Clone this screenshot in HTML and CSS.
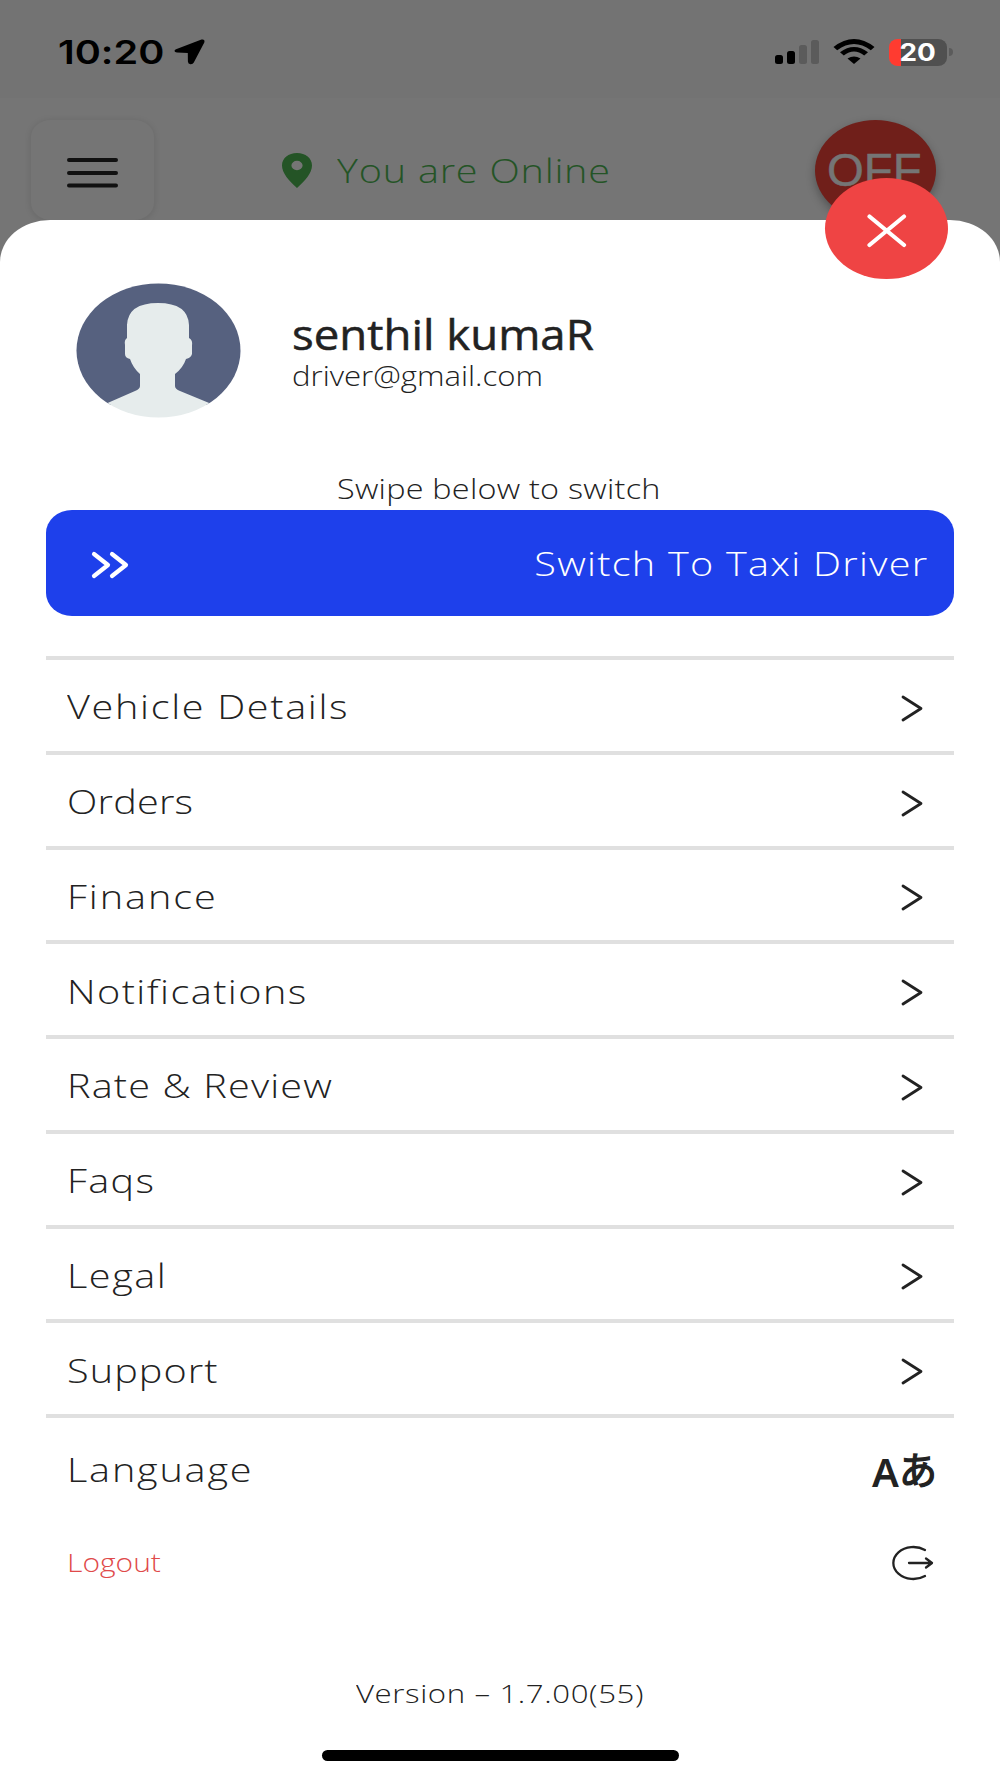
FILE: index.html
```
<!DOCTYPE html>
<html lang="en">
<head>
  <meta charset="UTF-8" />
  <meta name="viewport" content="width=device-width, initial-scale=1.0">
  <title>Driver Menu</title>
  <link rel="stylesheet" href="styles.css">
</head>
<body>
  <div class="screen">
    <div class="status-bar">
      <div class="status-left">
        <span class="time">10:20</span>
        <svg class="location" width="31" height="26" viewBox="0 0 31 26"><path d="M2 10.200 27.500.600Q31.300-.200 30.300 3.400L19.800 23.500Q18.800 25.400 16.500 25.200 14 25 13.900 22.500L13.800 14 3 13.600Q.600 13.200.500 11.900.500 10.800 2 10.200Z"/></svg>
      </div>
      <div class="status-right">
        <svg width="45" height="26" viewBox="0 0 45 26">
          <rect x="0" y="16" width="8" height="9" rx="2.500"/>
          <rect x="12" y="12" width="8" height="13" rx="2.500"/>
          <rect class="dim" x="24" y="6" width="8" height="19" rx="2.500"/>
          <rect class="dim" x="36" y="1" width="8" height="24" rx="2.500"/>
        </svg>
        <svg class="wifi" width="42" height="26" viewBox="0 0 42 26">
          <path d="M0.500 8Q21-8 41.500 8L37.800 11.300Q21-1.500 4.200 11.300Z"/>
          <path d="M7 13.300Q21 2.500 35 13.300L31.200 16.500Q21 8.500 10.800 16.500Z"/>
          <path d="M14.500 19.500Q21 15.300 27.500 19.500L21 25Z"/>
        </svg>
        <div class="battery"><span>20</span></div>
        <i class="battery-tip"></i>
      </div>
    </div>

    <div class="top-bar">
      <div class="menu-btn">
        <svg width="51" height="30" viewBox="0 0 51 30"><path d="M2 2H49M2 15H49M2 27.500H49"/></svg>
      </div>
      <div class="online">
        <svg width="30" height="35" viewBox="0 0 30 35"><path fill-rule="evenodd" d="M15 0C6.500 0 0 5 0 12.500 0 20 7 28 15 35 23 28 30 20 30 12.500 30 5 23.500 0 15 0ZM15 7.800A5.600 4.700 0 1 1 15 17.200 5.600 4.700 0 1 1 15 7.800Z"/></svg>
        <span class="wide">You are Online</span>
      </div>
      <div class="off-btn"><span class="wide">OFF</span></div>
    </div>

    <div class="sheet">
      <div class="close-btn">
        <svg width="40" height="34" viewBox="0 0 40 34"><path d="M2.500 2.500 37 31M37 2.500 2.500 31"/></svg>
      </div>

      <div class="profile">
        <svg class="avatar" width="165" height="135" viewBox="0 0 165 135">
          <defs><clipPath id="round"><ellipse cx="82.500" cy="67.500" rx="82" ry="67"/></clipPath></defs>
          <g clip-path="url(#round)">
            <path fill="#56617f" d="M0 0H165V122H0Z"/>
            <path fill="#e6ecec" d="M51 55V42Q52 20 82 20 112 20 113 42V55Q117 57 116 63V71Q115 75 110 76 107 85 99 91V103Q99 106 104 108L138 122V135H27V122L59 108Q64 106 64 103V91Q57 85 54 76 49 75 49 71V62Q48 57 51 55Z"/>
          </g>
        </svg>
        <div class="who">
          <div class="name wide">senthil kumaR</div>
          <div class="email wide">driver@gmail.com</div>
        </div>
      </div>

      <div class="hint"><span class="wide">Swipe below to switch</span></div>
      <div class="swipe">
        <svg width="38" height="28" viewBox="0 0 38 28"><path d="M3 3 17 14 3 25M21 3 35 14 21 25"/></svg>
        <span class="wide">Switch To Taxi Driver</span>
      </div>

      <div class="menu">
        <div class="row"><span class="wide">Vehicle Details</span><svg class="chevron" viewBox="0 0 22 27"><path d="M2 2 20 13.500 2 25"/></svg></div>
        <div class="row"><span class="wide">Orders</span><svg class="chevron" viewBox="0 0 22 27"><path d="M2 2 20 13.500 2 25"/></svg></div>
        <div class="row"><span class="wide">Finance</span><svg class="chevron" viewBox="0 0 22 27"><path d="M2 2 20 13.500 2 25"/></svg></div>
        <div class="row"><span class="wide">Notifications</span><svg class="chevron" viewBox="0 0 22 27"><path d="M2 2 20 13.500 2 25"/></svg></div>
        <div class="row"><span class="wide">Rate &amp; Review</span><svg class="chevron" viewBox="0 0 22 27"><path d="M2 2 20 13.500 2 25"/></svg></div>
        <div class="row"><span class="wide">Faqs</span><svg class="chevron" viewBox="0 0 22 27"><path d="M2 2 20 13.500 2 25"/></svg></div>
        <div class="row"><span class="wide">Legal</span><svg class="chevron" viewBox="0 0 22 27"><path d="M2 2 20 13.500 2 25"/></svg></div>
        <div class="row"><span class="wide">Support</span><svg class="chevron" viewBox="0 0 22 27"><path d="M2 2 20 13.500 2 25"/></svg></div>
        <div class="row language"><span class="wide">Language</span><div class="lang-icon"><b>A</b><span>あ</span></div></div>
      </div>

      <div class="logout">
        <span class="wide">Logout</span>
        <svg width="42" height="36" viewBox="0 0 42 36"><path d="M33 5A20 16 0 1 0 33 31M17 18H40M34 13.500 40 18 34 22.500"/></svg>
      </div>

      <div class="version"><span class="wide">Version – 1.7.00(55)</span></div>
      <div class="home-bar"></div>
    </div>
  </div>
</body>
</html>
```
FILE: styles.css
```
* {
  box-sizing: border-box;
}
body {
  margin: 0;
  font-family: "Open Sans", "Noto Sans CJK JP", sans-serif;
  font-weight: 300;
  font-size: 33px;
  font-variant-ligatures: none;
  color: #222;
  background: #757575;
}
svg {
  display: block;
  flex-shrink: 0;
}
.screen {
  width: 1000px;
  height: 1778px;
  overflow: hidden;
}
/* wide letterforms */
.wide {
  display: inline-block;
  white-space: nowrap;
  transform: scaleX(1.2);
  transform-origin: left center;
  letter-spacing: 0.65px;
}

/* status bar */
.status-bar {
  height: 98px;
  background: #737373;
  display: flex;
  justify-content: space-between;
  padding: 0 47px 0 58px;
}
.status-left, .status-right {
  display: flex;
  align-items: center;
  height: 104px;
}
.time {
  font-family: Inter, sans-serif;
  font-weight: 600;
  font-size: 33px;
  color: #000;
  width: 116px;
  transform: scaleX(1.2);
  transform-origin: left;
}
.dim {
  fill: #5b5b5b;
}
.wifi {
  margin: 0 14px 0 13px;
}
.battery {
  width: 58px;
  height: 27px;
  border-radius: 9px / 8px;
  background: linear-gradient(90deg, #ff3b30 12px, #505050 12px);
  font: 700 24px/27px Inter, sans-serif;
  color: #fff;
  text-align: center;
}
.battery span {
  display: inline-block;
  transform: scaleX(1.16);
}
.battery-tip {
  width: 4px;
  height: 8px;
  margin-left: 2px;
  border-radius: 0 4px 4px 0;
  background: #5b5b5b;
}

/* dimmed page header */
.top-bar {
  height: 122px;
  display: flex;
  align-items: flex-start;
  padding: 22px 64px 0 31px;
}
.menu-btn {
  width: 123px;
  height: 100px;
  border-radius: 20px / 17px;
  box-shadow: 0 1px 7px rgba(0, 0, 0, 0.12);
  display: flex;
  justify-content: center;
  padding-top: 38px;
}
.menu-btn path {
  stroke: #111;
  stroke-width: 4;
  stroke-linecap: round;
}
.online {
  display: flex;
  align-items: center;
  height: 100px;
  margin-left: 128px;
  gap: 25px;
  color: #245426;
}
.online svg {
  fill: #245426;
}
.off-btn {
  width: 121px;
  height: 101px;
  margin-left: auto;
  border-radius: 50%;
  background: #701f1a;
  box-shadow: 0 4px 10px rgba(0, 0, 0, 0.3);
  color: #757575;
  font: 400 46px/101px "Liberation Sans", sans-serif;
  padding-left: 12px;
}
.off-btn .wide {
  transform: scaleX(1.03);
  letter-spacing: 0;
  -webkit-text-stroke: 0.5px #757575;
}

/* bottom sheet */
.sheet {
  position: relative;
  height: 1558px;
  background: #fff;
  border-radius: 50px 50px 0 0 / 42px 42px 0 0;
  padding: 63px 46px 0;
}
.close-btn {
  position: absolute;
  top: -42px;
  right: 52px;
  width: 123px;
  height: 101px;
  border-radius: 50%;
  background: #ef4444;
  display: flex;
  align-items: center;
  justify-content: center;
  padding-top: 4px;
}
.close-btn path, .swipe path {
  fill: none;
  stroke: #fff;
  stroke-width: 4.200;
  stroke-linecap: round;
  stroke-linejoin: round;
}
.avatar {
  margin-left: 30px;
}
.profile {
  display: flex;
  height: 137px;
}
.who {
  margin-left: 51px;
  padding-top: 26px;
}
.name {
  display: block;
  font-size: 42px;
  font-weight: 500;
  line-height: 49px;
  letter-spacing: 0;
  transform: scaleX(1.085);
  -webkit-text-stroke: 0.5px #222;
}
.email {
  display: block;
  font-size: 27px;
  line-height: 35px;
  letter-spacing: 0;
  transform: scaleX(1.153);
}
.hint {
  height: 90px;
  padding: 50px 0 0 291px;
  font-size: 27px;
  line-height: 37px;
}
.hint .wide {
  letter-spacing: 0.2px;
}
.swipe {
  height: 106px;
  border-radius: 26px / 23px;
  background: #1e40eb;
  color: #fff;
  display: flex;
  align-items: center;
  justify-content: space-between;
  padding: 0 26px 0 45px;
}
.swipe svg {
  margin-top: 4px;
}
.swipe .wide {
  transform-origin: right center;
  letter-spacing: 1.05px;
}
.menu {
  margin-top: 40px;
}
.row {
  height: 94.750px;
  border-top: 4px solid #e0e0e0;
  display: flex;
  align-items: center;
  justify-content: space-between;
  padding: 3px 31px 0 21px;
}
.row:nth-child(1) .wide { letter-spacing: 1.4px; }
.row:nth-child(2) .wide { letter-spacing: 0.2px; }
.row:nth-child(3) .wide { letter-spacing: 1.6px; }
.row:nth-child(4) .wide { letter-spacing: 1.2px; }
.row:nth-child(5) .wide { letter-spacing: 0.95px; }
.row:nth-child(6) .wide { letter-spacing: 1.1px; }
.row:nth-child(7) .wide { letter-spacing: 1.3px; }
.row:nth-child(8) .wide { letter-spacing: 0.9px; }
.row:nth-child(9) .wide { letter-spacing: 1.5px; }
.chevron {
  width: 22px;
  height: 27px;
  margin-top: 3px;
}
.chevron path, .logout path {
  fill: none;
  stroke: #222;
  stroke-width: 2.800;
  stroke-linecap: round;
  stroke-linejoin: round;
}
.logout path {
  stroke-width: 2.300;
}
.row.language {
  height: 110px;
  padding-top: 0;
  padding-right: 20px;
}
.language .wide {
  margin-bottom: 4px;
}
.lang-icon {
  display: flex;
  align-items: baseline;
  padding-top: 3px;
}
.lang-icon b {
  font: 600 40px/50px "Noto Sans", sans-serif;
}
.lang-icon span {
  font: 400 38px/50px "Noto Sans CJK JP", sans-serif;
  -webkit-text-stroke: 1.3px #222;
  margin-right: -3px;
  padding-bottom: 3px;
  transform: translateY(-3px);
}
.logout {
  display: flex;
  align-items: center;
  justify-content: space-between;
  height: 76px;
  padding: 1px 20px 0 21px;
  color: #e04a4a;
  font-size: 25px;
}
.logout .wide {
  letter-spacing: 0;
  margin-bottom: 2px;
}
.version {
  height: 130px;
  padding: 75px 0 0 310px;
  font-size: 26px;
  line-height: 36px;
}
.version .wide {
  letter-spacing: 0.5px;
}
.home-bar {
  width: 357px;
  height: 11px;
  margin: 20px auto 0;
  border-radius: 6px;
  background: #000;
}
```
